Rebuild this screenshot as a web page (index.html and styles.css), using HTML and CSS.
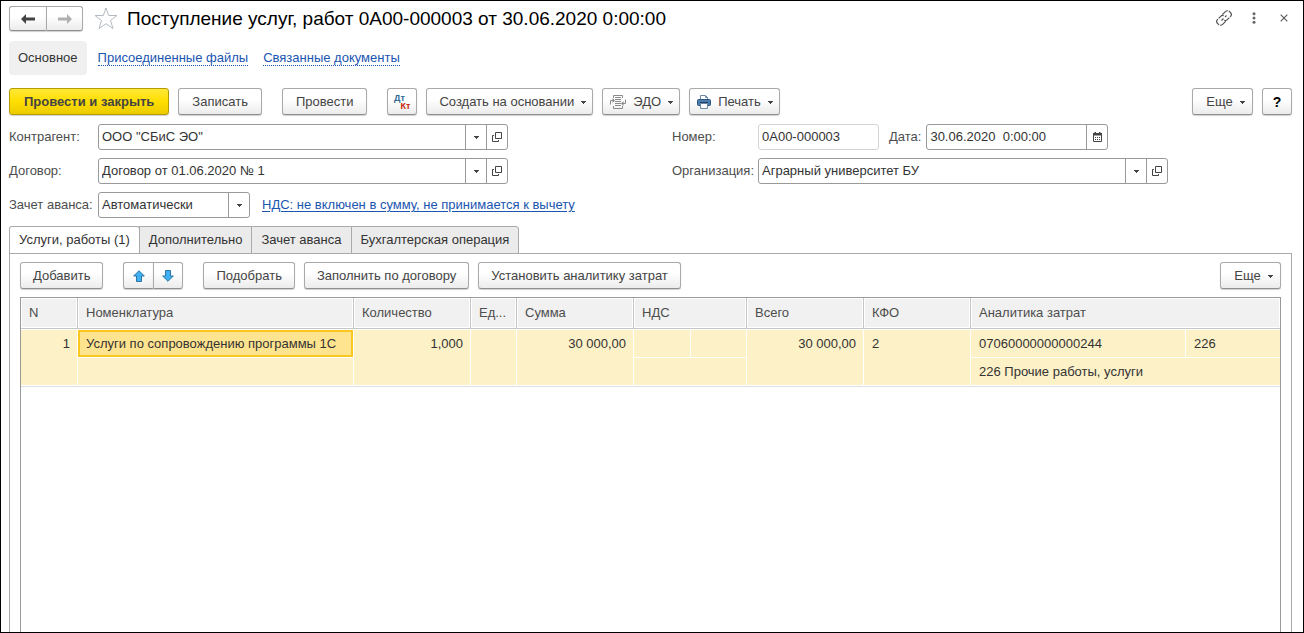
FILE: index.html
```html
<!DOCTYPE html>
<html lang="ru">
<head>
<meta charset="utf-8">
<meta name="viewport" content="width=device-width, initial-scale=1">
<title>Поступление услуг, работ</title>
<link rel="stylesheet" href="styles.css">
</head>
<body>
<svg class="defs" aria-hidden="true">
  <symbol id="open" viewBox="0 0 10 10"><path d="M3.500.5h6v6h-6zM2 3.500H.5v6h6V8" fill="none" stroke="#444"/></symbol>
  <symbol id="caret" viewBox="0 0 5 3"><path d="M0 0h5v1H4v1H3v1H2V2H1V1H0z" fill="#444"/></symbol>
</svg>
<div class="window">
  <header class="titlebar">
    <div class="pair history">
      <button class="btn" aria-label="Назад"><svg width="14" height="10" viewBox="0 0 14 10"><path d="M0 5l5-5v3.500h9v3H5V10z" fill="#444"/></svg></button>
      <button class="btn" aria-label="Вперед"><svg width="14" height="10" viewBox="0 0 14 10"><path d="M14 5L9 0v3.500H0v3h9V10z" fill="#b0b0b0"/></svg></button>
    </div>
    <button class="icon-btn star" aria-label="В избранное"><svg width="24" height="23" viewBox="0 0 24 23"><path d="M12 1l2.700 7.500H23l-6.500 5 2.500 8L12 16.700 5 21.500l2.500-8L1 8.500h8.300z" fill="none" stroke="#b4bac2"/></svg></button>
    <h1 class="title">Поступление услуг, работ 0А00-000003 от 30.06.2020 0:00:00</h1>
    <div class="window-tools">
      <button class="icon-btn" aria-label="Ссылка"><svg width="16" height="16" viewBox="0 0 16 16"><g fill="none" stroke="#555" stroke-width="1.200"><path d="M6.300 4.700L9.400 1.600a2.900 2.900 0 0 1 4.100 0l.9.9a2.900 2.900 0 0 1 0 4.100l-3.100 3.100a2.900 2.900 0 0 1-3 .7" stroke-dasharray="7 1"/><path d="M9.700 11.300l-3.100 3.100a2.900 2.900 0 0 1-4.100 0l-.9-.9a2.900 2.900 0 0 1 0-4.100l3.100-3.100a2.900 2.900 0 0 1 3-.7" stroke-dasharray="7 1"/><path d="M5.500 10.500l2-2M9 7l1.500-1.500"/></g></svg></button>
      <button class="icon-btn" aria-label="Меню"><svg width="4" height="12" viewBox="0 0 4 12"><g fill="#666"><circle cx="2" cy="1.700" r="1.500"/><circle cx="2" cy="6" r="1.500"/><circle cx="2" cy="10.300" r="1.500"/></g></svg></button>
      <button class="icon-btn" aria-label="Закрыть"><svg width="8" height="8" viewBox="0 0 8 8"><path d="M.7.7l6.600 6.600M7.300.7L.7 7.300" stroke="#555" stroke-width="1.100"/></svg></button>
    </div>
  </header>

  <nav class="sections">
    <a class="section current" href="#main">Основное</a>
    <a class="section" href="#files"><span>Присоединенные файлы</span></a>
    <a class="section" href="#docs"><span>Связанные документы</span></a>
  </nav>

  <div class="toolbar commands">
    <div class="group">
      <button class="btn primary">Провести и закрыть</button>
      <button class="btn">Записать</button>
    </div>
    <div class="group"><button class="btn">Провести</button></div>
    <div class="group">
      <button class="btn square" aria-label="Дебет и кредит"><span class="dtkt"><span class="dt">Дт</span><span class="kt">Кт</span></span></button>
      <button class="btn menu">Создать на основании<svg class="caret"><use href="#caret"/></svg></button>
      <button class="btn menu with-icon"><svg width="16" height="14" viewBox="0 0 16 14"><g fill="none" stroke="#8a8a8a"><path d="M3.500 3V.5h9V3M3.500 11v2.500h9V11M5 2.500h6M5 4.500h6M5 6.500h6M5 8.500h6M5 10.500h6"/><path d="M.5 9.500v-4H3M15.500 4.500v4H13"/></g><path d="M2.500 3v5L5 5.500zM13.500 6v5L11 8.500z" fill="#8a8a8a"/></svg>ЭДО<svg class="caret"><use href="#caret"/></svg></button>
      <button class="btn menu with-icon"><svg width="14" height="14" viewBox="0 0 14 14"><path d="M3.500 5V.5h5l2 2V5" fill="#fff" stroke="#6d88a5"/><path d="M8.500.5v2h2" fill="none" stroke="#6d88a5"/><rect x=".5" y="4.500" width="13" height="6" rx="1" fill="#4c7cae" stroke="#2c5582"/><path d="M3 7.500h8" stroke="#1f3f63"/><path d="M3.500 8.500h7v5h-7z" fill="#fff" stroke="#6d88a5"/></svg>Печать<svg class="caret"><use href="#caret"/></svg></button>
    </div>
    <div class="group end">
      <button class="btn menu more">Еще<svg class="caret"><use href="#caret"/></svg></button>
      <button class="btn square help">?</button>
    </div>
  </div>

  <form class="fields">
    <div class="column">
      <div class="row">
        <label for="partner">Контрагент:</label>
        <div class="field"><input id="partner" value='ООО "СБиС ЭО"'><button type="button" aria-label="Выбрать"><svg class="caret"><use href="#caret"/></svg></button><button type="button" aria-label="Открыть"><svg class="open"><use href="#open"/></svg></button></div>
      </div>
      <div class="row">
        <label for="contract">Договор:</label>
        <div class="field"><input id="contract" value="Договор от 01.06.2020 № 1"><button type="button" aria-label="Выбрать"><svg class="caret"><use href="#caret"/></svg></button><button type="button" aria-label="Открыть"><svg class="open"><use href="#open"/></svg></button></div>
      </div>
      <div class="row">
        <label for="advance">Зачет аванса:</label>
        <div class="field short"><select id="advance"><option>Автоматически</option></select><span class="select-mark"><svg class="caret"><use href="#caret"/></svg></span></div>
        <a class="vat" href="#vat">НДС: не включен в сумму, не принимается к вычету</a>
      </div>
    </div>
    <div class="column second">
      <div class="row">
        <label for="number">Номер:</label>
        <div class="field number"><input id="number" value="0А00-000003"></div>
        <label class="inline" for="date">Дата:</label>
        <div class="field date"><input id="date" value="30.06.2020  0:00:00"><button type="button" aria-label="Календарь"><svg width="9" height="10" viewBox="0 0 9 10"><path d="M.5 1.500h8v8h-8z" fill="#fff" stroke="#444"/><path d="M0 1h9v2.500H0zM1.500 0h1.500v1H1.500zM6 0h1.500v1H6z" fill="#444"/><path d="M2 5.500h5M2 7.500h5" stroke="#444" stroke-dasharray="1 1"/></svg></button></div>
      </div>
      <div class="row">
        <label for="org">Организация:</label>
        <div class="field"><input id="org" value="Аграрный университет БУ"><button type="button" aria-label="Выбрать"><svg class="caret"><use href="#caret"/></svg></button><button type="button" aria-label="Открыть"><svg class="open"><use href="#open"/></svg></button></div>
      </div>
    </div>
  </form>

  <div class="tabs" role="tablist">
    <button class="tab active" role="tab" aria-selected="true">Услуги, работы (1)</button>
    <button class="tab" role="tab" aria-selected="false">Дополнительно</button>
    <button class="tab" role="tab" aria-selected="false">Зачет аванса</button>
    <button class="tab" role="tab" aria-selected="false">Бухгалтерская операция</button>
  </div>

  <section class="panel" role="tabpanel">
    <div class="toolbar rows">
      <div class="group"><button class="btn">Добавить</button></div>
      <div class="group">
        <div class="pair">
          <button class="btn" aria-label="Вверх"><svg width="12" height="12" viewBox="0 0 12 12"><path d="M6 .7l5.300 5.300H8.500v5.500h-5V6H.7z" fill="#41b0f0" stroke="#2a75a3"/></svg></button>
          <button class="btn" aria-label="Вниз"><svg width="12" height="12" viewBox="0 0 12 12"><path d="M6 11.300L.7 6h2.800V.5h5V6h2.800z" fill="#41b0f0" stroke="#2a75a3"/></svg></button>
        </div>
      </div>
      <div class="group">
        <button class="btn">Подобрать</button>
        <button class="btn">Заполнить по договору</button>
        <button class="btn">Установить аналитику затрат</button>
      </div>
      <div class="group end"><button class="btn menu more">Еще<svg class="caret"><use href="#caret"/></svg></button></div>
    </div>
    <div class="grid">
      <table>
        <colgroup>
          <col class="c-n"><col class="c-name"><col class="c-sum"><col class="c-unit"><col class="c-sum"><col class="c-rate"><col class="c-vat"><col class="c-sum"><col class="c-kfo"><col class="c-code"><col>
        </colgroup>
        <thead>
          <tr><th>N</th><th>Номенклатура</th><th>Количество</th><th>Ед...</th><th>Сумма</th><th colspan="2">НДС</th><th>Всего</th><th>КФО</th><th colspan="2">Аналитика затрат</th></tr>
        </thead>
        <tbody>
          <tr class="first"><td class="num" rowspan="2">1</td><td class="selected">Услуги по сопровождению программы 1С</td><td class="num" rowspan="2">1,000</td><td rowspan="2"></td><td class="num" rowspan="2">30 000,00</td><td></td><td></td><td class="num" rowspan="2">30 000,00</td><td rowspan="2">2</td><td>07060000000000244</td><td>226</td></tr>
          <tr><td></td><td colspan="2"></td><td colspan="2">226 Прочие работы, услуги</td></tr>
        </tbody>
      </table>
    </div>
  </section>
</div>
</body>
</html>
```
FILE: styles.css
```css
* { box-sizing: border-box; }
body {
  margin: 0;
  background: #fff;
  color: #333;
  font: 13px/16px "Liberation Sans", Arial, sans-serif;
}
button, input, select { font: inherit; color: inherit; margin: 0; }
button { cursor: pointer; }
svg { display: block; flex: none; }
.defs { position: absolute; width: 0; height: 0; }
.caret { width: 5px; height: 3px; }
.open { width: 10px; height: 10px; }

.window {
  display: flex;
  flex-direction: column;
  min-height: 100vh;
  padding: 5px 11px 0 8px;
  border: 1px solid #000;
}

.titlebar { display: flex; align-items: center; height: 25px; }
.title { margin: 0 0 0 9px; font-size: 19px; line-height: 24px; font-weight: 400; color: #000; white-space: nowrap; }
.icon-btn { display: flex; align-items: center; justify-content: center; min-width: 16px; padding: 0; border: 0; background: none; }
.star { margin-left: 11px; }
.window-tools { display: flex; align-items: center; align-self: start; gap: 14px; height: 23px; margin-left: auto; }

.btn {
  display: flex;
  align-items: center;
  justify-content: center;
  height: 27px;
  padding: 0 13px;
  border: 1px solid #a9a9a9;
  border-bottom-color: #8f8f8f;
  border-radius: 3px;
  background: linear-gradient(#fff 40%, #ececec);
  box-shadow: 0 1px 1px #d0d0d0;
  color: #444;
  white-space: nowrap;
}
.primary {
  padding: 0 14px;
  border-color: #b39b00;
  background: linear-gradient(#ffe838, #ffde00 50%, #eccb00);
  font-weight: 700;
}
.menu { gap: 7px; padding: 0 6px 0 12px; }
.menu .caret { margin-top: 2px; }
.with-icon { padding-left: 7px; }
.with-icon + .with-icon { gap: 7px; }
.more { min-width: 61px; }
.rows .btn { padding: 0 12px; }
.rows .menu { padding: 0 6px 0 12px; }
.square { width: 30px; padding: 0; }
.help { color: #000; font-size: 14px; font-weight: 700; }
.dtkt { display: grid; font-size: 9px; line-height: 8px; font-weight: 700; }
.dt { color: #2f6a94; margin-right: 6px; }
.kt { color: #c81e0a; margin-left: 6px; }

.pair { display: flex; }
.pair .btn { width: 30px; padding: 0; }
.pair .btn:first-child { border-radius: 3px 0 0 3px; border-right: 0; }
.pair .btn:last-child { border-radius: 0 3px 3px 0; }
.history .btn { width: 37px; height: 25px; }

.sections { display: flex; margin-top: 10px; line-height: 34px; }
.section { margin-right: 15px; color: #1a55b0; text-decoration: none; }
.section span { border-bottom: 1px dotted #1a55b0; }
.current { margin-right: 11px; padding: 0 9px; border-radius: 4px; background: #f0f0f0; color: #333; }

.toolbar { display: flex; gap: 20px; }
.group { display: flex; gap: 9px; }
.end { margin-left: auto; }
.commands { margin-top: 13px; }

.fields { display: grid; grid-template-columns: 1fr 1fr; gap: 40px; margin: 9px -3px 0 0; }
.column { display: grid; grid-template-columns: 1fr; align-content: start; gap: 8px; }
.row { display: flex; align-items: center; }
.row label { flex: none; width: 89px; color: #4d4d4d; white-space: nowrap; }
.second label { width: 86px; }
.second .inline { width: auto; margin: 0 5px 0 10px; }
.field {
  display: flex;
  flex: 0 1 410px;
  min-width: 0;
  height: 26px;
  border: 1px solid #999;
  border-radius: 3px;
  background: #fff;
}
.field input, .field select {
  flex: 1;
  min-width: 0;
  width: 0;
  padding: 0 3px;
  border: 0;
  border-radius: 3px;
  background: none;
  outline: 0;
  appearance: none;
  white-space: pre;
}
.field button, .select-mark {
  display: flex;
  align-items: center;
  justify-content: center;
  flex: none;
  width: 21px;
  padding: 0;
  border: 0;
  border-left: 1px solid #999;
  background: none;
}
.short { flex-basis: 152px; }
.number { flex-basis: 121px; border-color: #d4d4d4; }
.date { flex-basis: 182px; }
.vat { margin-left: 12px; color: #1a55b0; white-space: nowrap; text-underline-offset: 2px; }

.tabs { display: flex; margin-top: 8px; margin-bottom: -1px; }
.tab {
  height: 28px;
  margin-left: -1px;
  padding: 0 9px;
  border: 1px solid #aaa;
  background: #ebebeb;
  white-space: nowrap;
}
.tab:last-child { border-radius: 0 3px 0 0; }
.active { margin-left: 0; border-bottom-color: #fff; border-radius: 3px 3px 0 0; background: #fff; }

.panel {
  display: flex;
  flex: 1;
  flex-direction: column;
  padding: 8px 10px 0;
  border: 1px solid #aaa;
  border-bottom: 0;
}
.grid { flex: 1; margin-top: 8px; border: 1px solid #999; border-bottom: 0; }
table { width: 100%; border-collapse: separate; border-spacing: 0; table-layout: fixed; }
.c-n { width: 57px; }
.c-name { width: 276px; }
.c-sum { width: 117px; }
.c-unit { width: 46px; }
.c-rate { width: 57px; }
.c-vat { width: 56px; }
.c-kfo { width: 107px; }
.c-code { width: 215px; }
th, td { padding: 0 8px; text-align: left; white-space: nowrap; overflow: hidden; }
th {
  height: 31px;
  border-right: 1px solid #c6c6c6;
  border-bottom: 1px solid #c6c6c6;
  background: #f1f1f1;
  box-shadow: inset 0 0 0 1px #fff;
  color: #4d4d4d;
  font-weight: 400;
}
th:last-child { border-right: 0; }
td {
  height: 28px;
  border-right: 1px solid #fff;
  border-bottom: 1px solid #fff;
  background: #fdf1c7;
}
.first td { height: 29px; border-top: 1px solid #fff; }
td:last-child { border-right: 0; }
.first td[rowspan] { padding-top: 6px; vertical-align: top; }
.num { text-align: right; padding-right: 7px; }
.selected { background: #ffe48f; box-shadow: inset 0 0 0 2px #fac71e; }
tbody { box-shadow: 0 1px 0 #e0e0e0; }
```
